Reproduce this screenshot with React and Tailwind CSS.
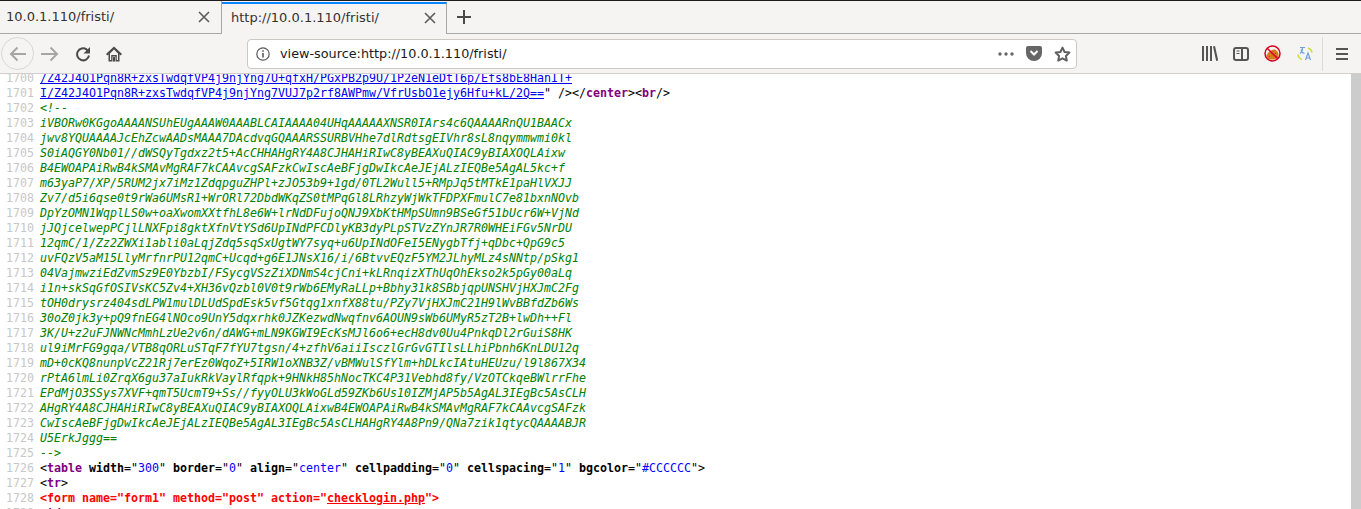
const comment = [
  "<!--",
  "iVBORw0KGgoAAAANSUhEUgAAAW0AAABLCAIAAAA04UHqAAAAAXNSR0IArs4c6QAAAARnQU1BAACx",
  "jwv8YQUAAAAJcEhZcwAADsMAAA7DAcdvqGQAAARSSURBVHhe7dlRdtsgEIVhr8sL8nqymmwmi0kl",
  "S0iAQGY0Nb01//dWSQyTgdxz2t5+AcCHHAHgRY4A8CJHAHiRIwC8yBEAXuQIAC9yBIAXOQLAixw",
  "B4EWOAPAiRwB4kSMAvMgRAF7kCAAvcgSAFzkCwIscAeBFjgDwIkcAeJEjALzIEQBe5AgAL5kc+f",
  "m63yaP7/XP/5RUM2jx7iMz1ZdqpguZHPl+zJO53b9+1gd/0TL2Wull5+RMpJq5tMTkE1paHlVXJJ",
  "Zv7/d5i6qse0t9rWa6UMsR1+WrORl72DbdWKqZS0tMPqGl8LRhzyWjWkTFDPXFmulC7e81bxnNOvb",
  "DpYzOMN1WqplLS0w+oaXwomXXtfhL8e6W+lrNdDFujoQNJ9XbKtHMpSUmn9BSeGf51bUcr6W+VjNd",
  "jJQjcelwepPCjlLNXFpi8gktXfnVtYSd6UpINdPFCDlyKB3dyPLpSTVzZYnJR7R0WHEiFGv5NrDU",
  "12qmC/1/Zz2ZWXi1abli0aLqjZdq5sqSxUgtWY7syq+u6UpINdOFeI5ENygbTfj+qDbc+QpG9c5",
  "uvFQzV5aM15LlyMrfnrPU12qmC+Ucqd+g6E1JNsX16/i/6BtvvEQzF5YM2JLhyMLz4sNNtp/pSkg1",
  "04VajmwziEdZvmSz9E0YbzbI/FSycgVSzZiXDNmS4cjCni+kLRnqizXThUqOhEkso2k5pGy00aLq",
  "i1n+skSqGfOSIVsKC5Zv4+XH36vQzbl0V0t9rWb6EMyRaLLp+Bbhy31k8SBbjqpUNSHVjHXJmC2Fg",
  "tOH0drysrz404sdLPW1mulDLUdSpdEsk5vf5Gtqg1xnfX88tu/PZy7VjHXJmC21H9lWvBBfdZb6Ws",
  "30oZ0jk3y+pQ9fnEG4lNOco9UnY5dqxrhk0JZKezwdNwqfnv6AOUN9sWb6UMyR5zT2B+lwDh++Fl",
  "3K/U+z2uFJNWNcMmhLzUe2v6n/dAWG+mLN9KGWI9EcKsMJl6o6+ecH8dv0Uu4PnkqDl2rGuiS8HK",
  "ul9iMrFG9gqa/VTB8qORLuSTqF7fYU7tgsn/4+zfhV6aiiIsczlGrGvGTIlsLLhiPbnh6KnLDU12q",
  "mD+0cKQ8nunpVcZ21Rj7erEz0WqoZ+5IRW1oXNB3Z/vBMWulSfYlm+hDLkcIAtuHEUzu/l9l867X34",
  "rPtA6lmLi0ZrqX6gu37aIukRkVaylRfqpk+9HNkH85hNocTKC4P31Vebhd8fy/VzOTCkqeBWlrrFhe",
  "EPdMjO3SSys7XVF+qmT5UcmT9+Ss//fyyOLU3kWoGLd59ZKb6Us10IZMjAP5b5AgAL3IEgBc5AsCLH",
  "AHgRY4A8CJHAHiRIwC8yBEAXuQIAC9yBIAXOQLAixwB4EWOAPAiRwB4kSMAvMgRAF7kCAAvcgSAFzk",
  "CwIscAeBFjgDwIkcAeJEjALzIEQBe5AgAL3IEgBc5AsCLHAHgRY4A8Pn9/QNa7zik1qtycQAAAABJR",
  "U5ErkJggg==",
  "-->",
];

function Row({ n, children }) {
  return (
    <div className="flex h-[15px] leading-[15px] whitespace-pre">
      <span className="w-[40px] shrink-0 pl-[6px] text-[#c8c8c8]">{n}</span>
      <span>{children}</span>
    </div>
  );
}

function B({ c, children }) {
  return <b className={c}>{children}</b>;
}

function Attr({ name, value }) {
  return (
    <>
      {" "}
      <b>{name}</b>="<span className="text-[#0000ff]">{value}</span>"
    </>
  );
}

function CloseX() {
  return (
    <svg width="12" height="12" viewBox="0 0 12 12" className="text-[#5b5b5b]">
      <path d="M1 1l10 10M11 1L1 11" stroke="currentColor" strokeWidth="1.6" />
    </svg>
  );
}

function Tab({ title, active }) {
  return (
    <div
      className={
        active
          ? "w-[225px] h-[32px] mt-px flex items-center justify-between pl-[9px] pr-[10px] pb-[3px] border-r border-[#a8a8a6] border-t-2 border-t-[#0a84ff]"
          : "w-[222px] h-[33px] flex items-center justify-between pl-[6px] pr-[11px] border-r border-b border-[#a8a8a6]"
      }
    >
      <span>{title}</span>
      <CloseX />
    </div>
  );
}

export default function App() {
  return (
    <div className="w-[1361px] h-[509px] overflow-hidden flex flex-col bg-white font-['DejaVu_Sans',sans-serif]">
      <div className="h-[34px] shrink-0 flex border-t border-[#1c1c1c] bg-[#f5f4f2] text-[13px] text-[#333]">
        <Tab title="10.0.1.110/fristi/" />
        <Tab title="http://10.0.1.110/fristi/" active />
        <div className="flex-1 flex items-center pl-[10px] border-b border-[#a8a8a6]">
          <svg width="14" height="14" viewBox="0 0 14 14" className="text-[#4a4a4a]">
            <path d="M7 0v14M0 7h14" stroke="currentColor" strokeWidth="2" />
          </svg>
        </div>
      </div>

      <div className="h-[40px] shrink-0 flex items-center bg-[#f5f4f2] border-b border-[#d0cfcc]">
        <div className="w-[33px] h-[33px] ml-[1px] rounded-full border border-[#d8d7d5] flex items-center justify-center">
          <svg width="18" height="16" viewBox="0 0 18 16" fill="none" stroke="#a6a6a6" strokeWidth="2">
            <path d="M17 8H2M8.5 1.5L2 8l6.5 6.5" />
          </svg>
        </div>
        <svg className="ml-[7px]" width="18" height="16" viewBox="0 0 18 16" fill="none" stroke="#a6a6a6" strokeWidth="2">
          <path d="M0 8h15M9.5 1.5L16 8l-6.5 6.5" />
        </svg>
        <svg className="ml-[16px]" width="16" height="16" viewBox="0 0 16 16" fill="none" stroke="#4a4a4a" strokeWidth="2">
          <path d="M14 9.500A6 6 0 1 1 11.500 3.400L13.500 5.500" />
          <path d="M15 1v6.500H8.500z" fill="#4a4a4a" stroke="none" />
        </svg>
        <svg className="ml-[15px]" width="16" height="16" viewBox="0 0 16 16" fill="#4a4a4a">
          <path d="M8 .5L16 8l-1.300 1.400L13.500 8.300V15.500H9.500V10.500H6.500V15.500H2.500V8.300L1.300 9.400 0 8z" />
          <path d="M4 7.500L8 3.600l4 3.900V14h-1.200V9H5.200v5H4z" fill="#f5f4f2" />
          <path d="M7 11h2v4.500H7z" />
        </svg>
        <div className="w-[830px] h-[30px] ml-[125px] flex items-center bg-white border border-[#ccc9c4] rounded-[4px] text-[12.8px] text-[#1a1a1a]">
          <svg className="ml-[8px]" width="14" height="14" viewBox="0 0 14 14" fill="none" stroke="#5a5a5a">
            <circle cx="7" cy="7" r="6.2" strokeWidth="1.2" />
            <path d="M7 6v4.500" strokeWidth="1.600" />
            <path d="M7 3.200v1.600" strokeWidth="1.600" />
          </svg>
          <span className="ml-[10px]">view-source:http://10.0.1.110/fristi/</span>
          <div className="ml-auto flex items-center">
            <svg width="16" height="4" viewBox="0 0 16 4" fill="#666">
              <circle cx="2" cy="2" r="1.7" />
              <circle cx="8" cy="2" r="1.7" />
              <circle cx="14" cy="2" r="1.7" />
            </svg>
            <svg className="ml-[12px]" width="16" height="15" viewBox="0 0 16 15">
              <path d="M2 0h12a2 2 0 0 1 2 2v5a8 8 0 0 1-16 0V2a2 2 0 0 1 2-2z" fill="#666" />
              <path d="M4.500 5L8 8.500 11.500 5" fill="none" stroke="#fff" strokeWidth="2" />
            </svg>
            <svg className="ml-[12px] mr-[5px]" width="17" height="16" viewBox="0 0 17 16" fill="none" stroke="#5f5f5f" strokeWidth="2" strokeLinejoin="round">
              <path d="M8.500 1.600l2.100 4.400 4.800.6-3.500 3.300.9 4.700-4.300-2.300-4.300 2.300.9-4.700L1.600 6.600l4.800-.6z" />
            </svg>
          </div>
        </div>
        <svg className="ml-[125px]" width="16" height="15" viewBox="0 0 16 15" fill="#555">
          <rect x="0" y="0" width="2" height="15" />
          <rect x="4" y="0" width="2" height="15" />
          <rect x="8" y="0" width="2" height="15" />
          <path d="M11 0.500l2-.5 3.200 14.500-2 .5z" />
        </svg>
        <svg className="ml-[15px]" width="16" height="14" viewBox="0 0 16 14" fill="none" stroke="#555" strokeWidth="2">
          <rect x="1" y="1" width="14" height="12" rx="2" />
          <path d="M9 1v12" />
          <path d="M3.500 4H6.500M3.500 6.500H6.500" strokeWidth="1" />
        </svg>
        <svg className="ml-[15px]" width="17" height="17" viewBox="0 0 17 17" fill="none">
          <path d="M2.500 10.500C4 7 7.500 4.500 11 4.500c2 1 3.500 3 3.500 5.500 0 2-1.500 4-4 4.500H6c-2 0-3-2-3.500-4z" fill="#d97a1e" />
          <path d="M5 12l1-1M8 7.500l1-1M11 9l1-1" stroke="#9a5410" />
          <circle cx="8.500" cy="8.500" r="7.500" stroke="#d70022" strokeWidth="1.500" />
          <path d="M3.200 3.200l10.600 10.600" stroke="#d70022" strokeWidth="1.500" />
        </svg>
        <svg className="ml-[16px]" width="16" height="15" viewBox="0 0 16 15" fill="none">
          <path d="M1 8.500a6 6 0 0 0 4 5M15 6.500a6 6 0 0 0-4-4.500" stroke="#c4e534" strokeWidth="1.600" />
          <path d="M3 1.500h5M5.500 1.500c0 3-1 5-2.500 6M4 3.500c.5 2 2 3.500 3.500 4" stroke="#6a9fd8" strokeWidth="1.100" />
          <path d="M8.500 14l2.500-7 2.500 7M9.500 12h3" stroke="#6a9fd8" strokeWidth="1.100" />
        </svg>
        <div className="w-px h-[34px] ml-[9px] bg-[#dcdbd8]" />
        <svg className="ml-[13px]" width="12" height="12" viewBox="0 0 12 12" fill="#555">
          <rect y="0" width="12" height="2" />
          <rect y="5" width="12" height="2" />
          <rect y="10" width="12" height="2" />
        </svg>
      </div>

      <div className="flex-1 min-h-0 flex">
        <div className="flex-1 overflow-hidden font-['DejaVu_Sans_Mono',monospace] text-[11.63px] text-black">
          <div className="-mt-[3px]">
            <Row n={1700}>
              <a className="text-[#0000ee] underline">/Z42J4O1Pqn8R+zxsTwdqfVP4j9njYng7U+qfxH/PGxPB2p9U/1P2eN1eDtT6p/Efs8bE8HanIT+</a>
            </Row>
            <Row n={1701}>
              <a className="text-[#0000ee] underline">I/Z42J4O1Pqn8R+zxsTwdqfVP4j9njYng7VUJ7p2rf8AWPmw/VfrUsbO1ejy6Hfu+kL/2Q==</a>
              {'" /></'}<B c="text-[#800080]">center</B>{"><"}<B c="text-[#800080]">br</B>{"/>"}
            </Row>
            {comment.map((line, i) => (
              <Row key={i} n={1702 + i}>
                <i className="text-[#008000]">{line}</i>
              </Row>
            ))}
            <Row n={1726}>
              {"<"}<B c="text-[#800080]">table</B>
              <Attr name="width" value="300" />
              <Attr name="border" value="0" />
              <Attr name="align" value="center" />
              <Attr name="cellpadding" value="0" />
              <Attr name="cellspacing" value="1" />
              <Attr name="bgcolor" value="#CCCCCC" />
              {">"}
            </Row>
            <Row n={1727}>
              {"<"}<B c="text-[#800080]">tr</B>{">"}
            </Row>
            <Row n={1728}>
              <b className="text-[#ff0000]">
                {'<form name="form1" method="post" action="'}
                <span className="underline">checklogin.php</span>
                {'">'}
              </b>
            </Row>
            <Row n={1729}>
              {"<"}<B c="text-[#800080]">td</B>{">"}
            </Row>
          </div>
        </div>
        <div className="w-[10px] shrink-0 bg-[#cccccc]" />
      </div>
    </div>
  );
}
